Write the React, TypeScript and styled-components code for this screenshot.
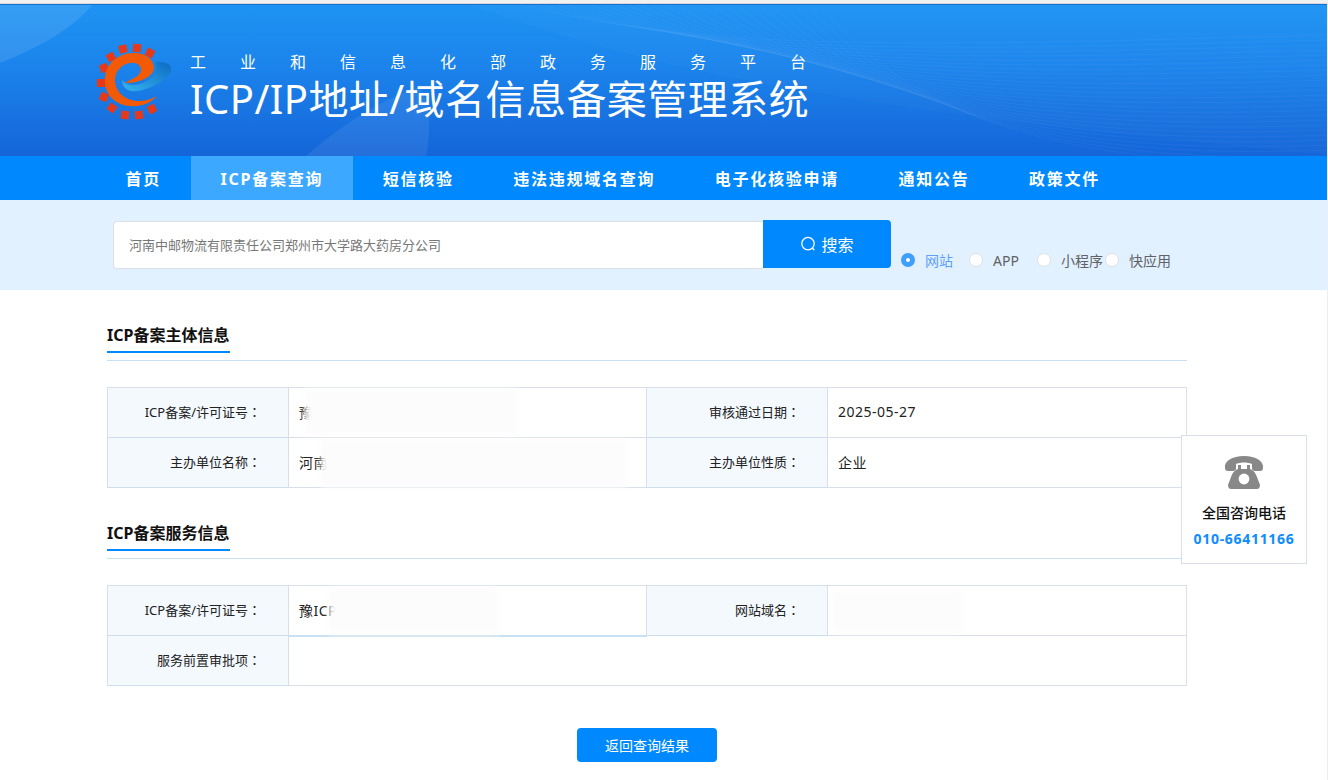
import React from "react";
import styled, { createGlobalStyle } from "styled-components";

const Global = createGlobalStyle`
  html, body { margin: 0; padding: 0; background: #fff; }
  body { font-family: "Noto Sans", "Noto Sans CJK SC", sans-serif; overflow: hidden; }
  * { box-sizing: border-box; }
`;

const Page = styled.div`
  position: relative;
  width: 1328px;
  height: 780px;
  overflow: hidden;
  border-right: 1px solid #eceef2;
`;
const TopStrip = styled.div`
  height: 4px;
  background: #f1f1f1;
  border-bottom: 1px solid #d8d8d8;
`;
const Header = styled.header`
  position: relative;
  height: 152px;
  overflow: hidden;
  display: flex;
  align-items: center;
  padding-left: 90px;
  background: linear-gradient(180deg, #1e93f3 0%, #1b84ec 40%, #1565d8 100%);
  border-top: 1px solid #1570d0;
`;
const Decor = styled.svg`
  position: absolute;
  inset: 0;
`;
const Logo = styled.svg`
  position: relative;
  flex: none;
  width: 90px;
  height: 90px;
`;
const TitleBlock = styled.div`
  position: relative;
  margin-left: 10px;
  padding-top: 13px;
  color: #fff;
`;
const SubTitle = styled.div`
  font-size: 16px;
  line-height: 24px;
  letter-spacing: 34px;
  white-space: nowrap;
`;
const MainTitle = styled.h1`
  margin: -2px 0 0;
  font-size: 40px;
  font-weight: 400;
  line-height: 53px;
  letter-spacing: 0.45px;
  white-space: nowrap;
`;
const Nav = styled.nav`
  height: 44px;
  display: flex;
  padding-left: 95.75px;
  background: #0089ff;
`;
const NavItem = styled.a<{ $active?: boolean }>`
  display: flex;
  align-items: center;
  padding: 0 29.75px;
  color: #fff;
  font-size: 16px;
  font-weight: 700;
  letter-spacing: 1.75px;
  white-space: nowrap;
  background: ${(p) => (p.$active ? "#3da8ff" : "transparent")};
`;
const SearchBand = styled.div`
  height: 90px;
  display: flex;
  padding: 20px 0 0 113px;
  background: #e2f1ff;
`;
const SearchInput = styled.div`
  width: 650px;
  height: 48px;
  margin-top: 1px;
  padding: 0 0 2px 15px;
  display: flex;
  align-items: center;
  background: #fff;
  border: 1px solid #dcdfe6;
  border-right: none;
  border-radius: 4px 0 0 4px;
  color: #777;
  font-size: 13px;
  white-space: nowrap;
`;
const SearchButton = styled.button`
  width: 128px;
  height: 48px;
  padding: 0;
  display: flex;
  align-items: center;
  justify-content: center;
  gap: 5px;
  border: none;
  border-radius: 0 4px 4px 0;
  background: #0089ff;
  color: #fff;
  font-family: inherit;
  font-size: 16px;
`;
const Radios = styled.div`
  margin: 30px 0 0 10px;
  display: grid;
  grid-template-columns: repeat(4, 68px);
  height: 20px;
`;
const RadioItem = styled.label`
  display: flex;
  align-items: center;
  gap: 10px;
  white-space: nowrap;
`;
const RadioDot = styled.span<{ $on?: boolean }>`
  flex: none;
  width: 14px;
  height: 14px;
  border-radius: 50%;
  background: #fff;
  border: ${(p) => (p.$on ? "5px solid #409eff" : "1px solid #dcdfe6")};
`;
const RadioText = styled.span<{ $on?: boolean }>`
  font-size: 14px;
  color: ${(p) => (p.$on ? "#5d9fff" : "#606266")};
`;
const Content = styled.main`
  width: 1080px;
  margin-left: 107px;
  padding-top: 30px;
`;
const SectionHead = styled.div`
  height: 41px;
  border-bottom: 1px solid #c9dff2;
`;
const SectionTitle = styled.h2`
  display: inline-block;
  margin: 0;
  height: 33px;
  padding-right: 1px;
  font-size: 16px;
  font-weight: 700;
  line-height: 30px;
  color: #111;
  border-bottom: 2px solid #0089ff;
  white-space: nowrap;
`;
const Table = styled.div<{ $mb: number }>`
  margin: 26px 0 ${(p) => p.$mb}px;
  display: grid;
  grid-template-columns: 181px 358px 181px 359px;
  grid-auto-rows: 50px;
  border-top: 1px solid #d8dfe8;
  border-left: 1px solid #d8dfe8;
`;
const Label = styled.div`
  display: flex;
  align-items: center;
  justify-content: flex-end;
  padding: 0 27px 2px 0;
  background: #f4f9fe;
  border-right: 1px solid #d8dfe8;
  border-bottom: 1px solid #cfdeec;
  color: #222;
  font-size: 13px;
  white-space: nowrap;
`;
const Colon = styled.span`
  font-family: "Noto Sans CJK TC", sans-serif;
`;
const Value = styled.div<{ $wide?: boolean; $accent?: boolean }>`
  position: relative;
  display: flex;
  align-items: center;
  padding: 0 0 2px 10px;
  border-right: 1px solid #d8dfe8;
  border-bottom: ${(p) => (p.$accent ? "2px solid #c9dff2" : "1px solid #d8dfe8")};
  height: ${(p) => (p.$accent ? "51px" : "auto")};
  color: #222;
  font-size: 14px;
  letter-spacing: 0.5px;
  white-space: nowrap;
  grid-column: ${(p) => (p.$wide ? "span 3" : "auto")};
`;
const Smudge = styled.div<{ $l: number; $t: number; $w: number; $h: number }>`
  position: absolute;
  left: ${(p) => p.$l}px;
  top: ${(p) => p.$t}px;
  width: ${(p) => p.$w}px;
  height: ${(p) => p.$h}px;
  background: #fcfcfd;
  filter: blur(3px);
`;
const Actions = styled.div`
  display: flex;
  justify-content: center;
`;
const BackButton = styled.button`
  width: 140px;
  height: 34px;
  padding: 0;
  border: none;
  border-radius: 4px;
  background: #0089ff;
  color: #fff;
  font-family: inherit;
  font-size: 14px;
`;
const PhoneCard = styled.aside`
  position: absolute;
  left: 1181px;
  top: 435px;
  width: 126px;
  height: 129px;
  display: flex;
  flex-direction: column;
  align-items: center;
  padding-top: 19px;
  background: #fff;
  border: 1px solid #d8dfe8;
`;
const PhoneLabel = styled.div`
  margin-top: 14px;
  font-size: 14px;
  font-weight: 500;
  line-height: 20px;
  color: #111;
  white-space: nowrap;
`;
const PhoneNumber = styled.div`
  margin-top: 6px;
  font-size: 14px;
  font-weight: 700;
  line-height: 20px;
  letter-spacing: 0.7px;
  color: #0f8cff;
  white-space: nowrap;
`;

const nav = ["首页", "ICP备案查询", "短信核验", "违法违规域名查询", "电子化核验申请", "通知公告", "政策文件"];
const radios = ["网站", "APP", "小程序", "快应用"];
const gear: [number, number, number][] = [
  [21, 21, -30], [33, 13, -12], [47, 12, 8], [60, 17, 28], [14, 32, -20], [11, 47, 0],
  [14, 61, 22], [22, 72, 35], [35, 79, 8], [49, 79, -8], [62, 73, -28],
];
const waves = Array.from({ length: 26 }, (_, i) => i);

export default function App() {
  return (
    <Page>
      <Global />
      <TopStrip />
      <Header>
        <Decor width="1328" height="152" viewBox="0 0 1328 152">
          <path d="M0 58C40 42 72 24 92 0H0Z" fill="#fff" opacity="0.1" />
          <path d="M305 152C340 120 390 90 420 82C432 105 430 130 426 152Z" fill="#fff" opacity="0.07" />
          <path d="M470 0C640 60 800 100 1328 150V0Z" fill="#fff" opacity="0.02" />
          {waves.map((i) => (
            <path
              key={i}
              d={`M${520 + i * 12} 0C${720 + i * 8} ${50 + i * 3} ${950 + i * 6} ${40 + i * 5} 1328 ${30 + i * 5}`}
              fill="none"
              stroke="#fff"
              strokeWidth="1"
              opacity="0.04"
            />
          ))}
        </Decor>
        <Logo viewBox="0 0 90 90">
          <defs>
            <linearGradient id="sw" x1="1" y1="0" x2="0" y2="1">
              <stop offset="0" stopColor="#0d6bc4" />
              <stop offset="1" stopColor="#35b4ee" />
            </linearGradient>
          </defs>
          {gear.map(([x, y, r]) => (
            <rect key={`${x}-${y}`} x={x - 4} y={y - 4} width="8" height="8" fill="#e6391a" transform={`rotate(${r} ${x} ${y})`} />
          ))}
          <path d="M66 26C76 25 82 29 81 34C79 43 62 53 47 55C38 56 32 52 32 44C36 49 43 50 50 48C60 45 68 38 66 26Z" fill="url(#sw)" />
          <path
            d="M67 60C60 68 50 71 40 70C25 69 14 58 15 43C15 28 29 16 45 17C56 17 64 24 64 32C63 41 50 47 35 47C41 43 50 41 51 34C51 29 46 26 40 27C31 28 25 36 25 44C25 55 34 64 47 65C55 65 62 63 67 60Z"
            fill="#f25a05"
          />
        </Logo>
        <TitleBlock>
          <SubTitle>工业和信息化部政务服务平台</SubTitle>
          <MainTitle>ICP/IP地址/域名信息备案管理系统</MainTitle>
        </TitleBlock>
      </Header>
      <Nav>
        {nav.map((n) => (
          <NavItem key={n} $active={n === "ICP备案查询"}>{n}</NavItem>
        ))}
      </Nav>
      <SearchBand>
        <SearchInput>河南中邮物流有限责任公司郑州市大学路大药房分公司</SearchInput>
        <SearchButton>
          <svg width="16" height="16" viewBox="0 0 16 16" fill="none" stroke="#fff" strokeWidth="1.3">
            <circle cx="8" cy="7.6" r="6.2" />
            <path d="M12.4 12.2l1.6 1.6" strokeLinecap="round" />
          </svg>
          搜索
        </SearchButton>
        <Radios>
          {radios.map((r, i) => (
            <RadioItem key={r}>
              <RadioDot $on={i === 0} />
              <RadioText $on={i === 0}>{r}</RadioText>
            </RadioItem>
          ))}
        </Radios>
      </SearchBand>
      <Content>
        <SectionHead><SectionTitle>ICP备案主体信息</SectionTitle></SectionHead>
        <Table $mb={30}>
          <Label>ICP备案/许可证号<Colon>：</Colon></Label>
          <Value>豫<Smudge $l={16} $t={1} $w={212} $h={46} /></Value>
          <Label>审核通过日期<Colon>：</Colon></Label>
          <Value>2025-05-27</Value>
          <Label>主办单位名称<Colon>：</Colon></Label>
          <Value>河南<Smudge $l={32} $t={2} $w={306} $h={48} /></Value>
          <Label>主办单位性质<Colon>：</Colon></Label>
          <Value>企业</Value>
        </Table>
        <SectionHead><SectionTitle>ICP备案服务信息</SectionTitle></SectionHead>
        <Table $mb={42}>
          <Label>ICP备案/许可证号<Colon>：</Colon></Label>
          <Value $accent>豫ICP<Smudge $l={40} $t={2} $w={170} $h={46} /></Value>
          <Label>网站域名<Colon>：</Colon></Label>
          <Value><Smudge $l={4} $t={4} $w={132} $h={42} /></Value>
          <Label>服务前置审批项<Colon>：</Colon></Label>
          <Value $wide />
        </Table>
        <Actions><BackButton>返回查询结果</BackButton></Actions>
      </Content>
      <PhoneCard>
        <svg width="40" height="34" viewBox="0 0 40 34" fill="#888">
          <path d="M1 13C0 6 8 1 20 1s20 5 19 12c0 2-1 3-3 3h-5c-2 0-3-1-3-3V9c-5-2-11-2-16 0v4c0 2-1 3-3 3H4c-2 0-3-1-3-3Z" />
          <path d="M14 10h3v4h6v-4h3v4c3 1 5 3 7 8l3 8c0 2-1 4-3 4H7c-2 0-3-2-3-4l3-8c2-5 4-7 7-8Z" />
          <circle cx="20" cy="24" r="5.4" fill="#fff" />
        </svg>
        <PhoneLabel>全国咨询电话</PhoneLabel>
        <PhoneNumber>010-66411166</PhoneNumber>
      </PhoneCard>
    </Page>
  );
}
